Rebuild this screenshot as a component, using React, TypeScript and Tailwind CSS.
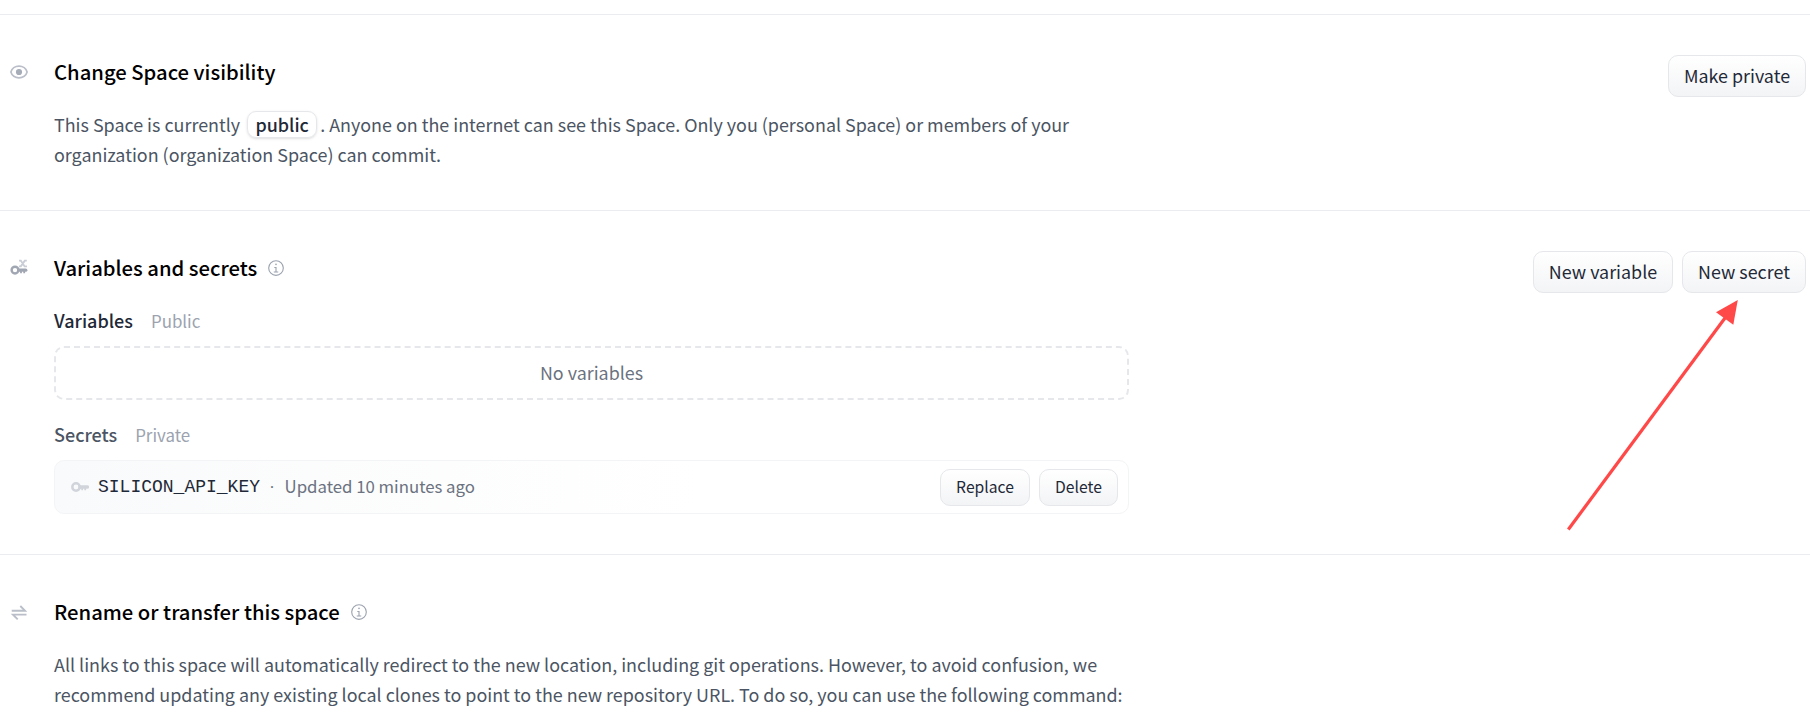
import type { ReactNode } from "react";

const body = "text-[17.92px] leading-[30px] text-[#4b5563] whitespace-nowrap";

function InfoIcon() {
  return (
    <svg className="h-[18px] w-[18px] shrink-0 text-[#9ca3af]" viewBox="0 0 32 32" fill="currentColor">
      <path d="M17 22v-8h-4v2h2v6h-3v2h8v-2zM16 8a1.5 1.5 0 1 0 1.5 1.5A1.5 1.5 0 0 0 16 8z" />
      <path d="M16 30a14 14 0 1 1 14-14 14 14 0 0 1-14 14zm0-26a12 12 0 1 0 12 12A12 12 0 0 0 16 4z" />
    </svg>
  );
}

function EyeIcon() {
  return (
    <svg className="h-[18px] w-[18px]" viewBox="0 0 18 18" fill="none">
      <path
        d="M.9 9C1.8 5.5 5.2 3.2 9 3.2S16.2 5.5 17.1 9C16.2 12.5 12.8 14.8 9 14.8S1.8 12.5 .9 9Z"
        stroke="#b9bec8"
        strokeWidth="1.7"
      />
      <circle cx="9" cy="9" r="3.1" fill="#a6acb8" />
    </svg>
  );
}

function KeyIcon({ className }: { className: string }) {
  return (
    <svg className={className} viewBox="0 0 18 10" fill="none" stroke="currentColor">
      <circle cx="5" cy="5" r="3.7" strokeWidth="2.5" />
      <path d="M9 5H16.4" strokeWidth="3.4" strokeLinecap="round" />
      <path d="M11.2 6v2.2M14.2 6v2.2" strokeWidth="1.8" />
    </svg>
  );
}

function VariableKeyIcon() {
  return (
    <svg className="h-[18px] w-[18px]" viewBox="0 0 18 18" fill="none">
      <path d="M9 1.6h1.8l3.8 5.8H17M16.8 1.6h-2L10.8 7.4H9" stroke="#c9cdd5" strokeWidth="1.9" />
      <circle cx="5" cy="11.1" r="3.4" stroke="#a0a6b2" strokeWidth="2.4" />
      <path d="M9 11.2h6.8" stroke="#a0a6b2" strokeWidth="3.2" strokeLinecap="round" />
      <path d="M11 12v2.3M14.2 12v2.3" stroke="#a0a6b2" strokeWidth="1.8" />
    </svg>
  );
}

function TransferIcon() {
  return (
    <svg className="h-[18px] w-[18px]" viewBox="0 0 18 18" fill="none" stroke="#b9bec8" strokeWidth="1.9">
      <path d="M1.7 7.7H15L10.3 3M16.5 11.6H3L7.7 16.3" />
    </svg>
  );
}

function Button({ className, children }: { className: string; children: ReactNode }) {
  return (
    <button
      className={`flex shrink-0 items-center justify-center whitespace-nowrap rounded-[10px] border border-[#e5e7eb] bg-linear-to-b from-white to-[#f3f4f6] text-[#1f2937] ${className}`}
    >
      {children}
    </button>
  );
}

function Section({
  className,
  icon,
  title,
  info,
  actions,
  children,
}: {
  className: string;
  icon: ReactNode;
  title: string;
  info?: boolean;
  actions?: ReactNode;
  children: ReactNode;
}) {
  return (
    <section className={`flex items-start border-t border-[#ebecef] pr-1 pl-[10px] ${className}`}>
      <div className="mt-12 w-11 shrink-0">{icon}</div>
      <div className="w-[1075px] shrink-0 pt-[42px]">
        <h2 className="flex h-[30px] items-center gap-[10px] text-[20.24px] font-medium whitespace-nowrap text-black">
          <span>{title}</span>
          {info && <InfoIcon />}
        </h2>
        {children}
      </div>
      <div className="mt-10 ml-auto flex gap-[9px]">{actions}</div>
    </section>
  );
}

export default function App() {
  return (
    <main className="relative h-[717px] w-[1810px] overflow-hidden bg-white pt-[14px] font-['Noto_Sans_CJK_SC',sans-serif]">
      <Section
        className="h-[196px]"
        icon={<EyeIcon />}
        title="Change Space visibility"
        actions={<Button className="h-[42px] w-[138px] pb-[2px] text-[17.9px]">Make private</Button>}
      >
        <p className={`mt-[22px] ${body}`}>
          This Space is currently{" "}
          <span className="mr-[3px] ml-[3px] inline-block h-[27px] w-[70px] rounded-[9px] border border-[#e5e7eb] text-center leading-[25px] font-medium text-[#1f2937] shadow-sm">
            public
          </span>
          . Anyone on the internet can see this Space. Only you (personal Space) or members of your
          <br />
          organization (organization Space) can commit.
        </p>
      </Section>

      <Section
        className="h-[344px]"
        icon={<VariableKeyIcon />}
        title="Variables and secrets"
        info
        actions={
          <>
            <Button className="h-[42px] w-[140px] pb-[2px] text-[17.9px]">New variable</Button>
            <Button className="h-[42px] w-[124px] pb-[2px] text-[17.9px]">New secret</Button>
          </>
        }
      >
        <div className="mt-[22px] flex h-[30px] items-center gap-[18px] text-[18px]">
          <span className="font-medium text-[#1f2937]">Variables</span>
          <span className="pt-[2px] text-[16.9px] text-[#9ca3af]">Public</span>
        </div>
        <div className="mt-[11px] flex h-[54px] items-center justify-center rounded-[10px] border-2 border-dashed border-[#e5e7eb] pb-[2px] text-[17.9px] text-[#6b7280]">
          No variables
        </div>
        <div className="mt-[19px] flex h-[30px] items-center gap-[18px] text-[18px]">
          <span className="font-medium text-[#4b5563]">Secrets</span>
          <span className="pt-[2px] text-[16.9px] text-[#9ca3af]">Private</span>
        </div>
        <div className="mt-[11px] flex h-[54px] items-center rounded-[10px] border border-[#f3f4f6] bg-linear-to-r from-[#f9fafb] to-white to-60% pr-[10px] pl-4">
          <KeyIcon className="h-[10px] w-[18px] text-[#d1d5db]" />
          <span className="ml-[9px] font-['Liberation_Mono',monospace] text-[18px] text-[#1f2937]">SILICON_API_KEY</span>
          <span className="w-6 text-center font-['Open_Sans',sans-serif] text-[17px] text-[#6b7280]">·</span>
          <span className="ml-[0.5px] text-[16.8px] text-[#6b7280]">Updated 10 minutes ago</span>
          <div className="ml-auto flex gap-[9px]">
            <Button className="h-[37px] w-[90px] pb-px text-[15.7px]">Replace</Button>
            <Button className="h-[37px] w-[79px] pb-px text-[15.7px]">Delete</Button>
          </div>
        </div>
      </Section>

      <Section className="h-[200px]" icon={<TransferIcon />} title="Rename or transfer this space" info>
        <p className={`mt-[22px] ${body}`}>
          All links to this space will automatically redirect to the new location, including git operations. However, to avoid confusion, we
          <br />
          recommend updating any existing local clones to point to the new repository URL. To do so, you can use the following command:
        </p>
      </Section>

      <svg className="pointer-events-none absolute top-[298px] left-[1564px]" width="180" height="236" viewBox="1564 298 180 236">
        <path d="M1568.3 529.5 1725 318" stroke="#ff4848" strokeWidth="3.2" />
        <path d="M1737.8 300 1716 312.3 1733.3 324.7Z" fill="#ff4848" />
      </svg>
    </main>
  );
}
